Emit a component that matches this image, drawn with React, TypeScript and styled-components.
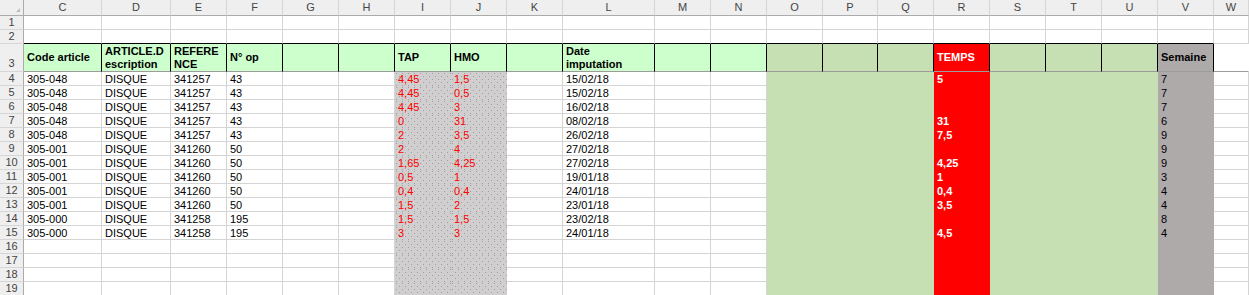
import React from 'react';
import styled, { createGlobalStyle } from 'styled-components';

const GlobalStyle = createGlobalStyle`
  html, body { margin: 0; padding: 0; background: #ffffff; }
  body { font-family: "Liberation Sans", Arial, sans-serif; overflow: hidden; }
`;

type Fill = 'plain' | 'mint' | 'olive' | 'red' | 'grey' | 'dots';
type Tone = 'ink' | 'alert' | 'light';

const FILLS: Record<Fill, string> = {
  plain: '#ffffff',
  mint: '#ccffcc',
  olive: '#c6e0b4',
  red: '#ff0000',
  grey: '#aeaaaa',
  dots: '#d0cece',
};

const TONES: Record<Tone, string> = {
  ink: '#000000',
  alert: '#ff0000',
  light: '#ffffff',
};

const GRID = '#d4d4d4';

const COLUMNS: { key: string; width: string }[] = [
  { key: 'C', width: '78px' },
  { key: 'D', width: '69px' },
  { key: 'E', width: '56px' },
  { key: 'F', width: '56px' },
  { key: 'G', width: '56px' },
  { key: 'H', width: '56px' },
  { key: 'I', width: '56px' },
  { key: 'J', width: '56px' },
  { key: 'K', width: '56px' },
  { key: 'L', width: '92px' },
  { key: 'M', width: '56px' },
  { key: 'N', width: '56px' },
  { key: 'O', width: '56px' },
  { key: 'P', width: '55px' },
  { key: 'Q', width: '56px' },
  { key: 'R', width: '56px' },
  { key: 'S', width: '56px' },
  { key: 'T', width: '56px' },
  { key: 'U', width: '56px' },
  { key: 'V', width: '56px' },
  { key: 'W', width: '1fr' },
];

const Sheet = styled.div`
  display: grid;
  grid-template-columns: 24px ${COLUMNS.map((c) => c.width).join(' ')};
  grid-template-rows: 16px 14px 14px 28px repeat(16, 14px);
  width: 1249px;
  height: 295px;
  overflow: hidden;
  font-size: 11px;
`;

const Corner = styled.div`
  position: relative;
  box-sizing: border-box;
  background: #efefef;
  border-right: 1px solid #ababab;
  border-bottom: 1px solid #ababab;

  &::after {
    content: '';
    position: absolute;
    right: 3px;
    bottom: 3px;
    width: 0;
    height: 0;
    border-left: 4px solid transparent;
    border-bottom: 4px solid #bdbdbd;
  }
`;

const ColLabel = styled.div`
  box-sizing: border-box;
  background: #efefef;
  border-right: 1px solid #d6d6d6;
  border-bottom: 1px solid #ababab;
  color: #444444;
  text-align: center;
  line-height: 15px;
  overflow: hidden;
`;

const RowLabel = styled.div<{ $tall?: boolean }>`
  box-sizing: border-box;
  display: flex;
  align-items: ${(p) => (p.$tall ? 'flex-end' : 'center')};
  justify-content: center;
  padding-bottom: ${(p) => (p.$tall ? '1px' : '0')};
  background: #efefef;
  border-right: 1px solid #ababab;
  border-bottom: 1px solid #d6d6d6;
  color: #444444;
  line-height: 13px;
`;

const Cell = styled.div<{ $fill: Fill; $tone?: Tone; $bold?: boolean; $ruled?: boolean }>`
  box-sizing: border-box;
  min-width: 0;
  overflow: hidden;
  white-space: nowrap;
  padding: 1px 0 0 3px;
  line-height: 13px;
  background-color: ${(p) => FILLS[p.$fill]};
  color: ${(p) => TONES[p.$tone ?? 'ink']};
  font-weight: ${(p) => (p.$bold ? 700 : 400)};
  border-right: 1px solid ${(p) => (p.$fill === 'plain' ? GRID : 'transparent')};
  border-bottom: 1px solid
    ${(p) => (p.$ruled ? '#000000' : p.$fill === 'plain' ? GRID : 'transparent')};
  ${(p) =>
    p.$fill === 'dots'
      ? `background-image:
          radial-gradient(circle at 0.5px 0.5px, #9e9e9e 0 0.65px, transparent 0.75px),
          radial-gradient(circle at 0.5px 0.5px, #9e9e9e 0 0.65px, transparent 0.75px);
        background-size: 6px 6px, 6px 6px;
        background-position: 1px 1px, 4px 4px;`
      : ''}
`;

const HeadCell = styled.div<{ $fill: Fill; $tone?: Tone; $boxed: boolean }>`
  box-sizing: border-box;
  display: flex;
  align-items: center;
  min-width: 0;
  overflow: hidden;
  white-space: nowrap;
  padding-left: 3px;
  line-height: 13px;
  font-weight: 700;
  background-color: ${(p) => FILLS[p.$fill]};
  color: ${(p) => TONES[p.$tone ?? 'ink']};
  border-right: 1px solid ${(p) => (p.$boxed ? '#000000' : 'transparent')};
  border-bottom: 1px solid #9c9c9c;
`;

type Record8 = [string, string, string, string, string, string, string, string, string];

const RECORDS: Record8[] = [
  ['305-048', 'DISQUE', '341257', '43', '4,45', '1,5', '15/02/18', '5', '7'],
  ['305-048', 'DISQUE', '341257', '43', '4,45', '0,5', '15/02/18', '', '7'],
  ['305-048', 'DISQUE', '341257', '43', '4,45', '3', '16/02/18', '', '7'],
  ['305-048', 'DISQUE', '341257', '43', '0', '31', '08/02/18', '31', '6'],
  ['305-048', 'DISQUE', '341257', '43', '2', '3,5', '26/02/18', '7,5', '9'],
  ['305-001', 'DISQUE', '341260', '50', '2', '4', '27/02/18', '', '9'],
  ['305-001', 'DISQUE', '341260', '50', '1,65', '4,25', '27/02/18', '4,25', '9'],
  ['305-001', 'DISQUE', '341260', '50', '0,5', '1', '19/01/18', '1', '3'],
  ['305-001', 'DISQUE', '341260', '50', '0,4', '0,4', '24/01/18', '0,4', '4'],
  ['305-001', 'DISQUE', '341260', '50', '1,5', '2', '23/01/18', '3,5', '4'],
  ['305-000', 'DISQUE', '341258', '195', '1,5', '1,5', '23/02/18', '', '8'],
  ['305-000', 'DISQUE', '341258', '195', '3', '3', '24/01/18', '4,5', '4'],
];

const BLANK: Record8 = ['', '', '', '', '', '', '', '', ''];

/* Fill of each column below the title row */
const bodyFill = (key: string): Fill => {
  if (key === 'I' || key === 'J') return 'dots';
  if (['O', 'P', 'Q', 'S', 'T', 'U'].includes(key)) return 'olive';
  if (key === 'R') return 'red';
  if (key === 'V') return 'grey';
  return 'plain';
};

const bodyTone = (key: string): Tone => {
  if (key === 'I' || key === 'J') return 'alert';
  if (key === 'R') return 'light';
  return 'ink';
};

const valueFor = (key: string, r: Record8): string => {
  const map: Record<string, number> = { C: 0, D: 1, E: 2, F: 3, I: 4, J: 5, L: 6, R: 7, V: 8 };
  return key in map ? r[map[key]] : '';
};

type Title = { fill: Fill; tone?: Tone; text?: React.ReactNode };

const TITLES: Record<string, Title> = {
  C: { fill: 'mint', text: 'Code article' },
  D: { fill: 'mint', text: <span>ARTICLE.D<br />escription</span> },
  E: { fill: 'mint', text: <span>REFERE<br />NCE</span> },
  F: { fill: 'mint', text: 'N° op' },
  G: { fill: 'mint' },
  H: { fill: 'mint' },
  I: { fill: 'mint', text: 'TAP' },
  J: { fill: 'mint', text: 'HMO' },
  K: { fill: 'mint' },
  L: { fill: 'mint', text: <span>Date<br />imputation</span> },
  M: { fill: 'mint' },
  N: { fill: 'mint' },
  O: { fill: 'olive' },
  P: { fill: 'olive' },
  Q: { fill: 'olive' },
  R: { fill: 'red', tone: 'light', text: 'TEMPS' },
  S: { fill: 'olive' },
  T: { fill: 'olive' },
  U: { fill: 'olive' },
  V: { fill: 'grey', text: 'Semaine' },
  W: { fill: 'plain' },
};

export default function App() {
  const bodyRows: Record8[] = [...RECORDS, BLANK, BLANK, BLANK, BLANK];

  return (
    <>
      <GlobalStyle />
      <Sheet>
        <Corner />
        {COLUMNS.map((c) => (
          <ColLabel key={`h-${c.key}`}>{c.key}</ColLabel>
        ))}

        {[1, 2].map((n) => (
          <React.Fragment key={`top-${n}`}>
            <RowLabel>{n}</RowLabel>
            {COLUMNS.map((c) => (
              <Cell key={`${c.key}${n}`} $fill="plain" $ruled={n === 2 && c.key !== 'W'} />
            ))}
          </React.Fragment>
        ))}

        <RowLabel $tall>3</RowLabel>
        {COLUMNS.map((c) => {
          const t = TITLES[c.key];
          return (
            <HeadCell key={`${c.key}3`} $fill={t.fill} $tone={t.tone} $boxed={c.key !== 'W'}>
              {t.text}
            </HeadCell>
          );
        })}

        {bodyRows.map((r, i) => {
          const n = i + 4;
          return (
            <React.Fragment key={`row-${n}`}>
              <RowLabel>{n}</RowLabel>
              {COLUMNS.map((c) => (
                <Cell
                  key={`${c.key}${n}`}
                  $fill={bodyFill(c.key)}
                  $tone={bodyTone(c.key)}
                  $bold={c.key === 'R'}
                >
                  {valueFor(c.key, r)}
                </Cell>
              ))}
            </React.Fragment>
          );
        })}
      </Sheet>
    </>
  );
}
